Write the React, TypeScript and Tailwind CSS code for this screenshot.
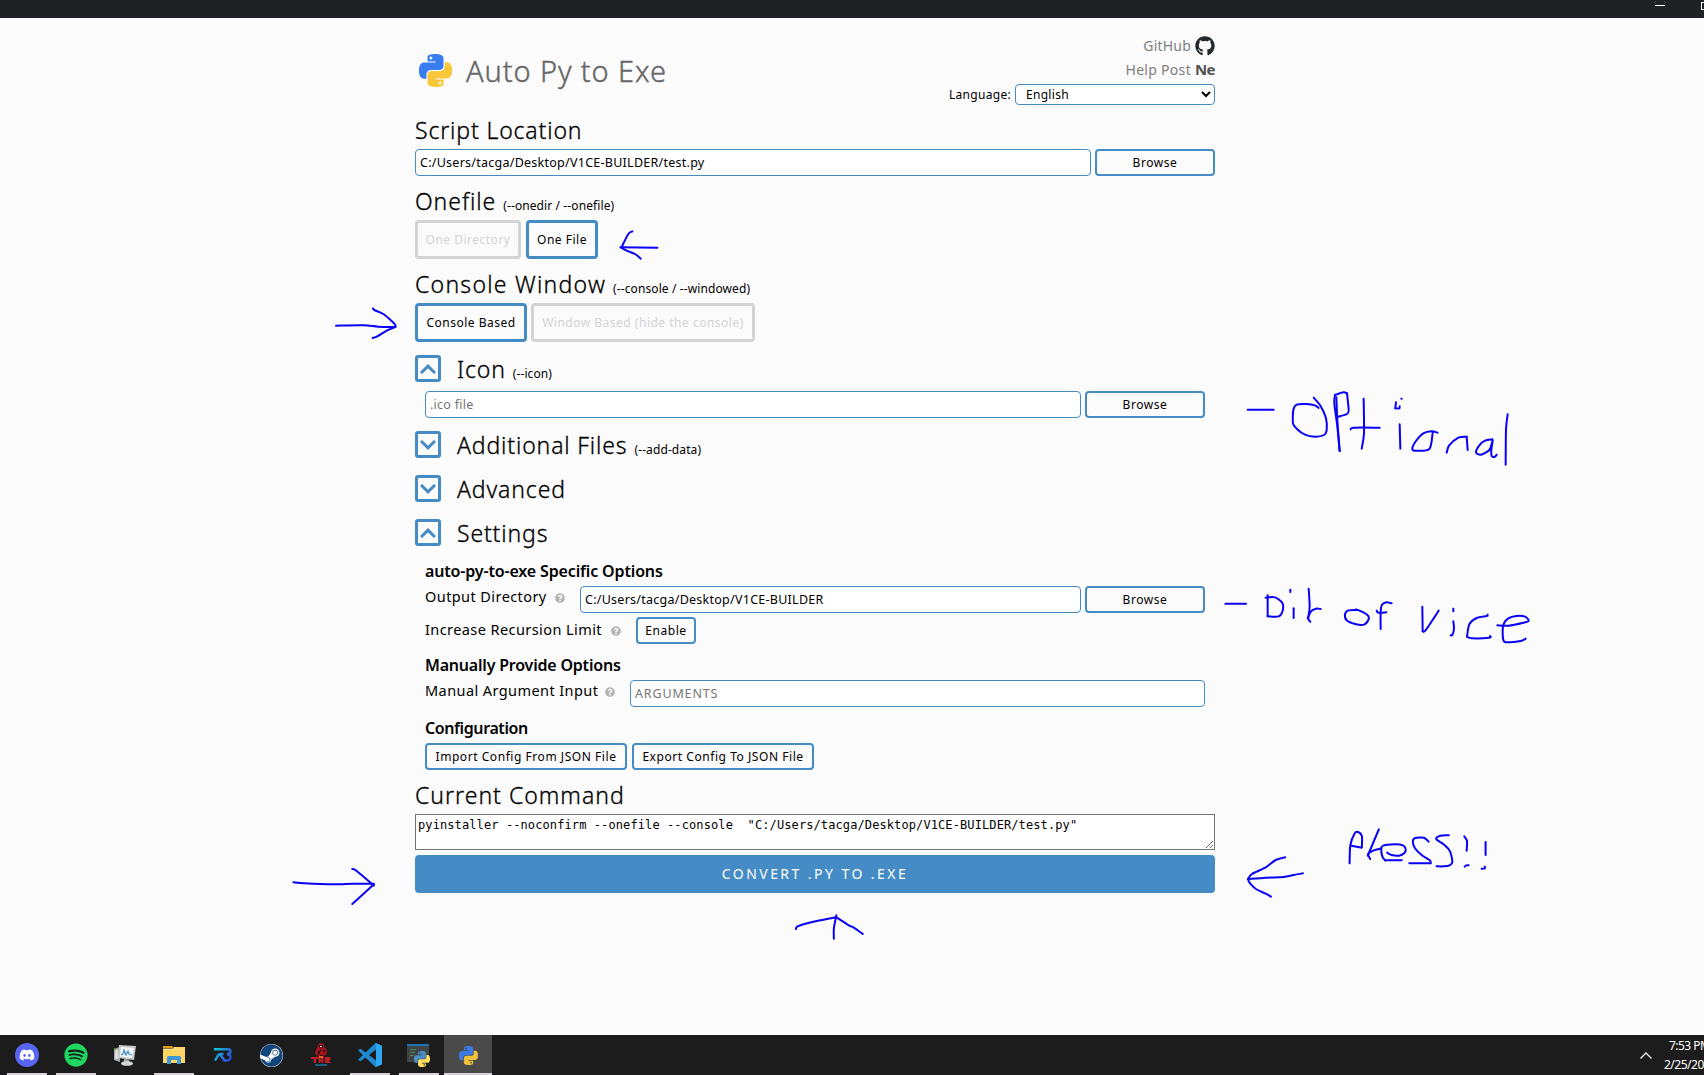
import React from 'react';
import { FaDiscord, FaGithub, FaSpotify, FaSteam, FaQuestionCircle } from 'react-icons/fa';

type Stroke = number[];

/* Catmull-Rom smoothing for a pen stroke given as x, y pairs. */
function penPath(p: Stroke): string {
  const n = p.length / 2;
  const at = (i: number) => {
    const k = Math.max(0, Math.min(n - 1, i));
    return [p[k * 2], p[k * 2 + 1]];
  };
  let d = `M${p[0]} ${p[1]}`;
  for (let i = 0; i < n - 1; i++) {
    const [a, b, c, e] = [at(i - 1), at(i), at(i + 1), at(i + 2)];
    const t = 7;
    d += `C${b[0] + (c[0] - a[0]) / t} ${b[1] + (c[1] - a[1]) / t} ${c[0] - (e[0] - b[0]) / t} ${c[1] - (e[1] - b[1]) / t} ${c[0]} ${c[1]}`;
  }
  return d;
}

function Ink({ place, viewBox, label, strokes }: { place: string; viewBox: string; label: string; strokes: Stroke[] }) {
  return (
    <svg
      role="img"
      aria-label={label}
      className={`pointer-events-none absolute overflow-visible ${place}`}
      viewBox={viewBox}
      preserveAspectRatio="none"
      fill="none"
      stroke="#0a00f5"
      strokeWidth={2}
      strokeLinecap="round"
      strokeLinejoin="round"
    >
      {strokes.map((s, i) => (
        <path key={i} d={penPath(s)} vectorEffect="non-scaling-stroke" />
      ))}
    </svg>
  );
}

const PY =
  'M14.25.18l.9.2.73.26.59.3.45.32.34.34.25.34.16.33.1.3.04.26.02.2-.01.13V8.5l-.05.63-.13.55-.21.46-.26.38-.3.31-.33.25-.35.19-.35.14-.33.1-.3.07-.26.04-.21.02H8.77l-.69.05-.59.14-.5.22-.41.27-.33.32-.27.35-.2.36-.15.37-.1.35-.07.32-.04.27-.02.21v3.06H3.17l-.21-.03-.28-.07-.32-.12-.35-.18-.36-.26-.36-.36-.35-.46-.32-.59-.28-.73-.21-.88-.14-1.05-.05-1.23.06-1.22.16-1.04.24-.87.32-.71.36-.57.4-.44.42-.33.42-.24.4-.16.36-.1.32-.05.24-.01h.16l.06.01h8.16v-.83H6.18l-.01-2.75-.02-.37.05-.34.11-.31.17-.28.25-.26.31-.23.38-.2.44-.18.51-.15.58-.12.64-.1.71-.06.77-.04.84-.02 1.27.05zm-6.3 1.98l-.23.33-.08.41.08.41.23.34.33.22.41.09.41-.09.33-.22.23-.34.08-.41-.08-.41-.23-.33-.33-.22-.41-.09-.41.09z';

function PythonLogo({ className, blue = '#387ef0', yellow = '#fac73b' }: { className: string; blue?: string; yellow?: string }) {
  return (
    <svg viewBox="0 0 24 24" className={className}>
      <path d={PY} fill={blue} />
      <path d={PY} fill={yellow} transform="rotate(180 12 12)" />
    </svg>
  );
}

function Heading({ children, flag, className = '' }: { children: React.ReactNode; flag?: string; className?: string }) {
  return (
    <h2 className={`h-[30px] whitespace-nowrap text-[23px] font-light leading-[30px] [-webkit-text-stroke:0.3px_#000] ${className}`}>
      {children}
      {flag && <small className="ml-[7px] text-[12px] font-normal tracking-[0.1px] [-webkit-text-stroke:0]">{flag}</small>}
    </h2>
  );
}

function Fold({ open, title, flag, className }: { open: boolean; title: string; flag?: string; className: string }) {
  return (
    <div className={`flex h-[30px] ${className}`}>
      <button className="mt-[1px] flex h-[27px] w-[26px] items-center justify-center rounded-[3px] border-[3px] border-[#458bc6]">
        <svg viewBox="0 0 16 10" className="h-[10px] w-4" fill="none" stroke="#458bc6" strokeWidth="3">
          <path d={open ? 'M1 9L8 2.2L15 9' : 'M1 1L8 7.8L15 1'} />
        </svg>
      </button>
      <Heading flag={flag} className="ml-4 tracking-[0.85px]">{title}</Heading>
    </div>
  );
}

const field =
  'h-[27px] min-w-0 rounded-[4px] border border-[#458bc6] bg-white pl-1 pb-px text-[12.5px] tracking-[0.260px] outline-none placeholder:text-[#757575]';
const btn = 'h-[27px] shrink-0 whitespace-nowrap rounded-[4px] border-2 border-[#458bc6] bg-[#fbfbfb] text-[12px] tracking-[0.550px]';
const big = 'h-[39px] shrink-0 whitespace-nowrap rounded-[4px] border-[3px] text-[12px] tracking-[0.500px]';
const sub = 'h-6 whitespace-nowrap text-[16px] font-semibold leading-6';
const label = 'h-5 whitespace-nowrap text-[14.5px] leading-5 tracking-[0.420px]';

function Help({ className }: { className: string }) {
  return <FaQuestionCircle className={`size-[10px] shrink-0 text-[#b4b4b4] ${className}`} />;
}

function Slot({ children, running, active }: { children: React.ReactNode; running?: boolean; active?: boolean }) {
  return (
    <div className={`flex h-10 w-[49px] flex-col items-center ${active ? 'border-l border-[#1c1c1c] bg-[#4a4a4a]' : ''}`}>
      <div className="flex h-[38px] items-center pt-[2px]">{children}</div>
      {running && <div className={`h-[2px] bg-[#d6d2d6] ${active ? 'w-12' : 'w-10'}`} />}
    </div>
  );
}

function Taskbar() {
  return (
    <footer className="flex h-10 w-full items-center overflow-hidden bg-[#1c1c1c] pl-[2px]">
      <Slot running>
        <span className="flex size-6 items-center justify-center rounded-full bg-[#5865f2]">
          <FaDiscord className="size-4 text-white" />
        </span>
      </Slot>
      <Slot running>
        <FaSpotify className="size-6 text-[#1ed760]" />
      </Slot>
      <Slot>
        <svg viewBox="0 0 24 24" className="size-6">
          <path d="M1 6l6-2v15l-6-2z" fill="#a9abad" />
          <path d="M2 7h3v9H2z" fill="#dcdcdc" />
          <path d="M6 2l17 1-2 14-16-2z" fill="#c4c8ca" />
          <path d="M8 4l13 1-2 10-12-1.500z" fill="#f6fafc" />
          <path d="M8 12l2-1 1-4 2 5 2-4 1 3 3 1" fill="none" stroke="#3b8fc4" strokeWidth="1.200" />
          <path d="M11 16l5 .5.500 3h-6z" fill="#a4a6a8" />
          <ellipse cx="14" cy="20.500" rx="6" ry="2.300" fill="#d4d6d7" />
          <path d="M1 5.500h1.500v2H1z" fill="#6ac03b" />
        </svg>
      </Slot>
      <Slot running>
        <svg viewBox="0 0 22 20" className="h-5 w-[22px]">
          <path d="M0 1h9l1.500 2H0z" fill="#e19a12" />
          <path d="M0 3.500h9.500L11 2h11v16H0z" fill="#fdd362" />
          <path d="M0 4h22v1H0z" fill="#fbe08c" />
          <path d="M4 19v-6.500Q4 11 5.500 11h11Q18 11 18 12.500V19h-4v-4H8v4z" fill="#3f97d6" />
        </svg>
      </Slot>
      <Slot>
        <svg viewBox="0 0 18 16" className="h-4 w-[18px]" fill="none" strokeWidth="2.400">
          <defs>
            <linearGradient id="rb" gradientUnits="userSpaceOnUse" x1="0" y1="0" x2="18" y2="14">
              <stop offset="0" stopColor="#12d1d8" />
              <stop offset=".5" stopColor="#1f86dc" />
              <stop offset="1" stopColor="#2c3be0" />
            </linearGradient>
          </defs>
          <path d="M0 2.200h14q2.800 0 2.500 2.500-.5 2.300-3.500 2.500 3.800.3 3.500 3.300-.3 3-4 3h-2L5.500 6.500" stroke="url(#rb)" />
          <path d="M9.500 7H6Q4 7.500 3.500 9.500L1 13.500" stroke="url(#rb)" />
        </svg>
      </Slot>
      <Slot>
        <span className="flex size-[23px] items-center justify-center rounded-full bg-white">
          <FaSteam className="size-[23px] text-[#12457c]" />
        </span>
      </Slot>
      <Slot>
        <svg viewBox="0 0 20 24" className="h-6 w-5">
          <path d="M10 0q3.500 0 3.500 4l2.500 3.500-1 4.500h-2v3H7v-3H5L4 8.500l2.500-4Q6.500 0 10 0z" fill="#a5141e" />
          <path d="M8 2h4v2.500H8zM7 8h2v3H7zM12 7h2v2h-2zM9 12h3v2H9zM9 6h1v2H9z" fill="#1c1215" />
          <path d="M9 3h2v1H9z" fill="#d9d2d2" />
          <path d="M0 14h7v2H5v4H3v-4H0zM7 14h2l1 3 1-3h2l-1 6h-1l-1-2-1 2H8zM14 14h5l1 2-2 1 2 3h-6z" fill="#c01d26" />
          <path d="M8 13h4v2H8z" fill="#d86a1c" />
          <path d="M4 21h12v2H4z" fill="#175f80" />
        </svg>
      </Slot>
      <Slot running>
        <svg viewBox="0 0 24 24" className="size-6">
          <path d="M17.500 0L24 2.800v18.400L17.500 24 7.500 14.500l-5 3.800L0 17l4.800-5L0 7l2.500-1.300 5 3.800zM18 6.500L11 12l7 5.500z" fill="#1f8ad2" fillRule="evenodd" />
          <path d="M17.500 0L24 2.800v18.400L17.500 24q.5-1 .5-2V2q0-1-.5-2z" fill="#2ea7ee" />
        </svg>
      </Slot>
      <Slot running>
        <span className="relative block h-[22px] w-[23px]">
          <span className="block h-[18px] w-[22px] border-t-2 border-[#1e72b8] bg-[#3f4446] pl-[3px] pt-[3px]">
            <span className="mb-[2px] block h-px w-1.5 bg-[#4c8a4c]" />
            <span className="mb-[2px] block h-px w-[5px] bg-[#4c8a4c]" />
            <span className="block h-px w-1 bg-[#4c8a4c]" />
          </span>
          <PythonLogo className="absolute left-[7px] top-[7px] size-4" blue="#4a8fc4" yellow="#ffe063" />
        </span>
      </Slot>
      <Slot running active>
        <PythonLogo className="size-[19px]" blue="#3c7ce4" yellow="#f0c03a" />
      </Slot>
      <div className="ml-auto flex h-10 items-center">
        <svg viewBox="0 0 12 7" className="mr-3 h-[7px] w-3" fill="none" stroke="#f0f0f0" strokeWidth="1.300">
          <path d="M.5 6.500L6 1l5.500 5.500" />
        </svg>
        <div className="w-10 whitespace-nowrap text-[12px] leading-[19px] text-white">
          <div className="pl-[5px] tracking-[-0.550px]">7:53 PM</div>
          <div className="tracking-[-0.500px]">2/25/20</div>
        </div>
      </div>
    </footer>
  );
}

function Annotations() {
  return (
    <>
      <Ink place="left-[400px] top-[20px] h-[250px] w-[420px]" viewBox="0 0 1260 750" label="Arrow to One File"
        strokes={[[697, 634, 685, 642, 665, 681], [662, 682, 772, 683], [662, 682, 680, 692, 705, 702, 722, 716]]} />
      <Ink place="left-[320px] top-[265px] h-[280px] w-[460px]" viewBox="0 0 1380 840" label="Arrow to Console Based"
        strokes={[[48, 182, 130, 181, 175, 185, 226, 186], [159, 130, 163, 135, 190, 147, 215, 168, 226, 180, 226, 186], [158, 219, 172, 214, 200, 197, 226, 186]]} />
      <Ink place="left-[280px] top-[770px] h-[180px] w-[640px]" viewBox="0 0 1568 540" label="Arrows to Convert"
        strokes={[
          [33, 337, 60, 340, 130, 343, 180, 341, 230, 341], [177, 297, 188, 303, 230, 347], [230, 343, 177, 402],
          [1264, 477, 1267, 470, 1285, 462, 1315, 453, 1362, 442], [1362, 441, 1395, 467, 1405, 472, 1428, 492], [1363, 436, 1357, 475, 1357, 506],
        ]} />
      <Ink place="left-[900px] top-[790px] h-[160px] w-[620px]" viewBox="0 0 1568 480" label="Press!!"
        strokes={[
          [974, 202, 950, 210, 925, 232, 890, 252, 880, 267], [1019, 250, 995, 255, 970, 261, 925, 263, 880, 267], [880, 267, 884, 278, 900, 297, 925, 311, 938, 320],
          [1137, 220, 1139, 165, 1150, 130, 1158, 126, 1168, 138, 1168, 172], [1168, 173, 1142, 167],
          [1211, 118, 1183, 197], [1189, 207, 1184, 192, 1198, 181, 1217, 175],
          [1232, 188, 1243, 195, 1262, 197, 1275, 190, 1279, 178, 1272, 166, 1250, 163, 1222, 167, 1217, 177, 1220, 200, 1227, 211], [1227, 211, 1269, 211],
          [1337, 155, 1325, 143, 1303, 144, 1297, 154, 1302, 174, 1320, 196, 1340, 211, 1342, 220], [1342, 220, 1288, 220],
          [1388, 136, 1366, 137, 1356, 147, 1376, 164, 1391, 184, 1397, 216, 1390, 226, 1375, 229, 1357, 229],
          [1427, 139, 1434, 153, 1433, 182], [1428, 230, 1432, 226, 1438, 226], [1481, 156, 1481, 195], [1471, 236, 1479, 235, 1479, 230],
        ]} />
      <Ink place="left-[1200px] top-[370px] h-[120px] w-[340px]" viewBox="0 0 1020 360" label="- Optional"
        strokes={[
          [143, 119, 221, 119],
          [341, 83, 363, 110, 378, 145, 380, 180, 372, 195, 345, 200, 315, 194, 290, 176, 279, 160, 280, 120, 290, 104, 320, 102, 345, 106, 356, 114],
          [405, 75, 403, 100, 412, 170, 419, 243], [409, 82, 412, 150, 419, 243], [405, 75, 430, 67, 441, 70], [441, 70, 446, 120, 441, 132, 415, 140],
          [491, 86, 492, 190, 485, 236], [452, 178, 462, 173, 539, 173],
          [588, 97, 586, 115], [586, 115, 598, 115, 599, 109], [604, 86, 605, 86], [599, 163, 601, 236],
          [713, 188, 695, 184, 670, 190, 648, 213, 637, 235, 645, 242, 688, 237, 698, 188],
          [740, 248, 747, 227, 775, 203, 800, 200], [800, 200, 803, 240],
          [877, 208, 855, 212, 838, 226, 828, 247, 843, 254, 868, 240, 878, 211, 874, 240, 875, 258, 885, 260, 890, 254],
          [923, 133, 918, 180, 917, 284],
        ]} />
      <Ink place="left-[1200px] top-[570px] h-[90px] w-[340px]" viewBox="0 0 1020 270" label="- Dir of vice"
        strokes={[
          [76, 101, 138, 101], [203, 76, 203, 139], [197, 83, 225, 82, 247, 99, 248, 122, 236, 139, 203, 139],
          [271, 59, 271, 66], [281, 115, 281, 144],
          [326, 56, 329, 110, 325, 145, 331, 155], [323, 145, 333, 124, 348, 116, 362, 117],
          [475, 120, 445, 121, 435, 133, 440, 151, 465, 162, 492, 164, 505, 150, 505, 138, 490, 127, 468, 118],
          [575, 100, 560, 97, 546, 104, 542, 125, 542, 177], [530, 122, 535, 128, 559, 127],
          [667, 110, 668, 184], [668, 184, 676, 182, 705, 139, 716, 122],
          [760, 116, 760, 124], [760, 154, 762, 175, 757, 195, 752, 196],
          [863, 134, 860, 138, 830, 144, 808, 163, 801, 200], [801, 200, 815, 205, 868, 203, 870, 198],
          [892, 166, 925, 167, 970, 158, 986, 152, 975, 140, 950, 138, 925, 145, 910, 165, 909, 205, 915, 216, 940, 216, 965, 212, 977, 206],
        ]} />
    </>
  );
}

export default function App() {
  return (
    <div className="relative flex h-[1075px] w-[1704px] flex-col overflow-hidden bg-[#fbfbfb] font-['Noto_Sans',sans-serif] text-black">
      <div className="flex h-[18px] shrink-0 justify-end bg-[#202124]">
        <div className="mr-9 mt-[5px] h-px w-[10px] bg-white" />
        <div className="mt-[2px] h-2 w-[3px] border-b border-l border-t border-white" />
      </div>

      <main className="ml-[415px] w-[800px] grow">
        <header className="flex h-[97px] justify-between">
          <div className="flex h-[97px] pl-1 pt-[36px]">
            <PythonLogo className="size-[33px]" />
            <h1 className="ml-[14px] mt-[-1px] whitespace-nowrap text-[29px] font-light leading-[36px] tracking-[0.900px] text-[#666] [-webkit-text-stroke:0.4px_#666]">Auto Py to Exe</h1>
          </div>
          <div className="flex flex-col items-end pt-[18px]">
            <div className="flex h-5 items-center text-[14px] text-[#808080]">
              <span className="mr-1 whitespace-nowrap pb-[2px] tracking-[0.200px]">GitHub</span>
              <FaGithub className="size-5 text-[#24292e]" />
            </div>
            <div className="mt-[3px] flex h-5 items-center text-[14px] text-[#808080]">
              <span className="mr-1 whitespace-nowrap tracking-[0.300px]">Help Post</span>
              <span className="w-5 text-[15px] font-bold tracking-[-0.600px] text-[#505050]">Ne</span>
            </div>
            <div className="mt-[5px] flex h-[21px] items-center text-[12px]">
              <span className="mr-1 whitespace-nowrap tracking-[0.300px]">Language:</span>
              <select className="h-[21px] w-[200px] rounded-[4px] border border-[#458bc6] bg-white px-1.5 text-[12px] tracking-[0.300px]">
                <option>English</option>
              </select>
            </div>
          </div>
        </header>

        <Heading className="tracking-[0.85px]">Script Location</Heading>
        <div className="mt-1 flex gap-1">
          <input className={`${field} grow`} defaultValue="C:/Users/tacga/Desktop/V1CE-BUILDER/test.py" />
          <button className={`${btn} w-[120px]`}>Browse</button>
        </div>

        <Heading flag="(--onedir / --onefile)" className="mt-[10px] tracking-[0.95px]">Onefile</Heading>
        <div className="mt-1 flex gap-[5px]">
          <button className={`${big} w-[106px] border-[#d3d3d3] text-[#d3d3d3]`}>One Directory</button>
          <button className={`${big} w-[72px] border-[#458bc6]`}>One File</button>
        </div>

        <Heading flag="(--console / --windowed)" className="mt-[10px] tracking-[1.25px]">Console Window</Heading>
        <div className="mt-1 flex gap-1">
          <button className={`${big} w-[112px] border-[#458bc6]`}>Console Based</button>
          <button className={`${big} w-[224px] border-[#d3d3d3] text-[#d3d3d3]`}>Window Based (hide the console)</button>
        </div>

        <Fold open title="Icon" flag="(--icon)" className="mt-3" />
        <div className="mx-[10px] mt-[7px] flex gap-1">
          <input className={`${field} grow`} placeholder=".ico file" />
          <button className={`${btn} w-[120px]`}>Browse</button>
        </div>
        <Fold open={false} title="Additional Files" flag="(--add-data)" className="mt-3" />
        <Fold open={false} title="Advanced" className="mt-[14px]" />
        <Fold open title="Settings" className="mt-[14px]" />

        <section className="mx-[10px] mt-[11px]">
          <h3 className={`${sub} tracking-[-0.150px]`}>auto-py-to-exe Specific Options</h3>
          <div className="mt-[3px] flex">
            <span className={`${label} w-[130px]`}>Output Directory</span>
            <Help className="mt-[7px]" />
            <input className={`${field} ml-[15px] mr-1 grow`} defaultValue="C:/Users/tacga/Desktop/V1CE-BUILDER" />
            <button className={`${btn} w-[120px]`}>Browse</button>
          </div>
          <div className="mt-1 flex">
            <span className={`${label} mt-[2px] w-[186px]`}>Increase Recursion Limit</span>
            <Help className="mt-[9px]" />
            <button className={`${btn} ml-[15px] w-[60px]`}>Enable</button>
          </div>
          <h3 className={`${sub} mt-[9px] tracking-[-0.200px]`}>Manually Provide Options</h3>
          <div className="mt-[3px] flex">
            <span className={`${label} w-[180px]`}>Manual Argument Input</span>
            <Help className="mt-[7px]" />
            <input className={`${field} ml-[15px] grow placeholder:tracking-[0.850px]`} placeholder="ARGUMENTS" />
          </div>
          <h3 className={`${sub} mt-[9px] tracking-[-0.400px]`}>Configuration</h3>
          <div className="mt-[3px] flex gap-[5px]">
            <button className={`${btn} w-[202px]`}>Import Config From JSON File</button>
            <button className={`${btn} w-[182px]`}>Export Config To JSON File</button>
          </div>
        </section>

        <Heading className="mt-[10px] tracking-[1px]">Current Command</Heading>
        <textarea
          className="mt-1 block h-9 w-[800px] border border-[#767676] bg-white px-[2px] py-[2px] font-['DejaVu_Sans_Mono',monospace] text-[12px] leading-4 tracking-[0.100px] outline-none"
          defaultValue={'pyinstaller --noconfirm --onefile --console  "C:/Users/tacga/Desktop/V1CE-BUILDER/test.py"'}
        />
        <button className="mt-[5px] h-[38px] w-[800px] rounded-[4px] bg-[#458bc6] pb-[2px] text-[14px] tracking-[2.450px] text-white">CONVERT .PY TO .EXE</button>
      </main>

      <Taskbar />
      <Annotations />
    </div>
  );
}
